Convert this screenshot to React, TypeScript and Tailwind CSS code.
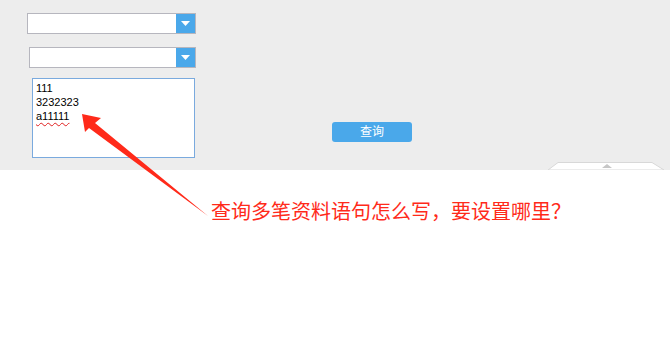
import React from 'react';

const SelectBox = ({ className }: { className: string }) => (
  <div className={`flex h-[21px] border border-[#b6b6be] bg-white ${className}`}>
    <div className="flex-1" />
    <div className="flex w-[19px] items-center justify-center bg-[#4aa8ea]">
      <svg width="9" height="5" viewBox="0 0 9 5">
        <polygon points="0,0 9,0 4.5,5" fill="#ffffff" />
      </svg>
    </div>
  </div>
);

export default function App() {
  return (
    <div className="relative h-[361px] w-[670px] bg-white font-['Liberation_Sans','Noto_Sans_CJK_SC',sans-serif]">
      {/* query panel */}
      <div className="relative flex h-[170px] bg-[#ededed]">
        <div className="flex flex-col pt-[13px]">
          <SelectBox className="ml-[27px] w-[169px]" />
          <SelectBox className="ml-[29px] mt-[13px] w-[167px]" />
          <div className="ml-[32px] mt-[10px] h-[80px] w-[163px] border border-[#7aaade] bg-white px-[3px] pt-[2px] text-[11px] leading-[14px] text-black">
            <div>111</div>
            <div>3232323</div>
            <div>
              <span className="underline decoration-[#e02020] decoration-wavy decoration-1 underline-offset-2">a11111</span>
            </div>
          </div>
        </div>
        <button className="ml-[136px] mt-[122px] h-[20px] w-[80px] rounded-[3px] bg-[#4aa8ea] text-[12px] leading-[20px] text-white">
          查询
        </button>

        {/* collapse tab */}
        <svg className="absolute left-[547px] top-[162px]" width="118" height="8" viewBox="0 0 118 8">
          <polygon points="11,0.5 105,0.5 117,8 1,8" fill="#ffffff" stroke="#d8d8d8" strokeWidth="1" />
          <polygon points="55,6 65,6 60,2" fill="#c6c6c6" />
        </svg>
      </div>

      {/* annotation */}
      <div className="pl-[211px] pt-[28px] text-[20px] leading-[28px] text-[#ff2a1a]">
        查询多笔资料语句怎么写，要设置哪里？
      </div>
      <svg className="absolute left-0 top-0" width="670" height="361" viewBox="0 0 670 361">
        <polygon points="82,114 101,118 95,123 208,216 89,128 85,132" fill="#ff2a1a" />
      </svg>
    </div>
  );
}
